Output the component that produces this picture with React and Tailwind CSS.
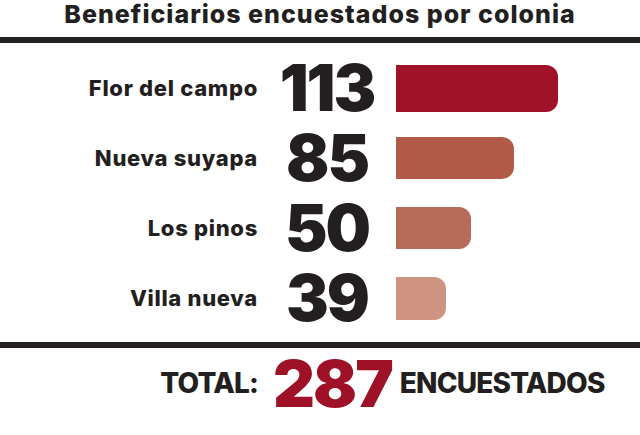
export default function App() {
  const rows = [
    { label: "Flor del campo", value: "113", w: 162, h: 47, color: "bg-[#a01228]" },
    { label: "Nueva suyapa", value: "85", w: 118, h: 42, color: "bg-[#b05a47]" },
    { label: "Los pinos", value: "50", w: 75, h: 42, color: "bg-[#b96b59]" },
    { label: "Villa nueva", value: "39", w: 50, h: 43, color: "bg-[#cf9381]" },
  ];
  return (
    <div className="w-[640px] h-[435px] bg-white overflow-hidden text-[#231f20] font-['Inter',sans-serif]">
      <div className="h-[28px] leading-[28px] text-center text-[25px] font-extrabold tracking-[1px] whitespace-nowrap">
        Beneficiarios encuestados por colonia
      </div>
      <div className="mt-[9px] h-[6px] bg-[#231f20]" />
      <div className="flex flex-col pt-[10px]">
        {rows.map((r) => (
          <div key={r.label} className="flex items-center h-[70px]">
            <div className="w-[258px] text-right text-[22px] font-extrabold leading-none tracking-[0.7px] whitespace-nowrap">{r.label}</div>
            <div className="w-[138px] text-center text-[64px] font-black leading-none tracking-[-2px]">{r.value}</div>
            <div
              className={`${r.color} rounded-r-[12px]`}
              style={{ width: r.w, height: r.h }}
            />
          </div>
        ))}
      </div>
      <div className="mt-[9px] h-[6px] bg-[#231f20]" />
      <div className="flex items-center h-[70px]">
        <div className="w-[258px] text-right text-[28px] font-extrabold leading-none tracking-[-0.8px]">TOTAL:</div>
        <div className="ml-[15px] text-[65px] font-black leading-none text-[#9e1126] tracking-[-2px]">287</div>
        <div className="ml-[8px] text-[28px] font-extrabold leading-none tracking-[-0.8px]">ENCUESTADOS</div>
      </div>
    </div>
  );
}
